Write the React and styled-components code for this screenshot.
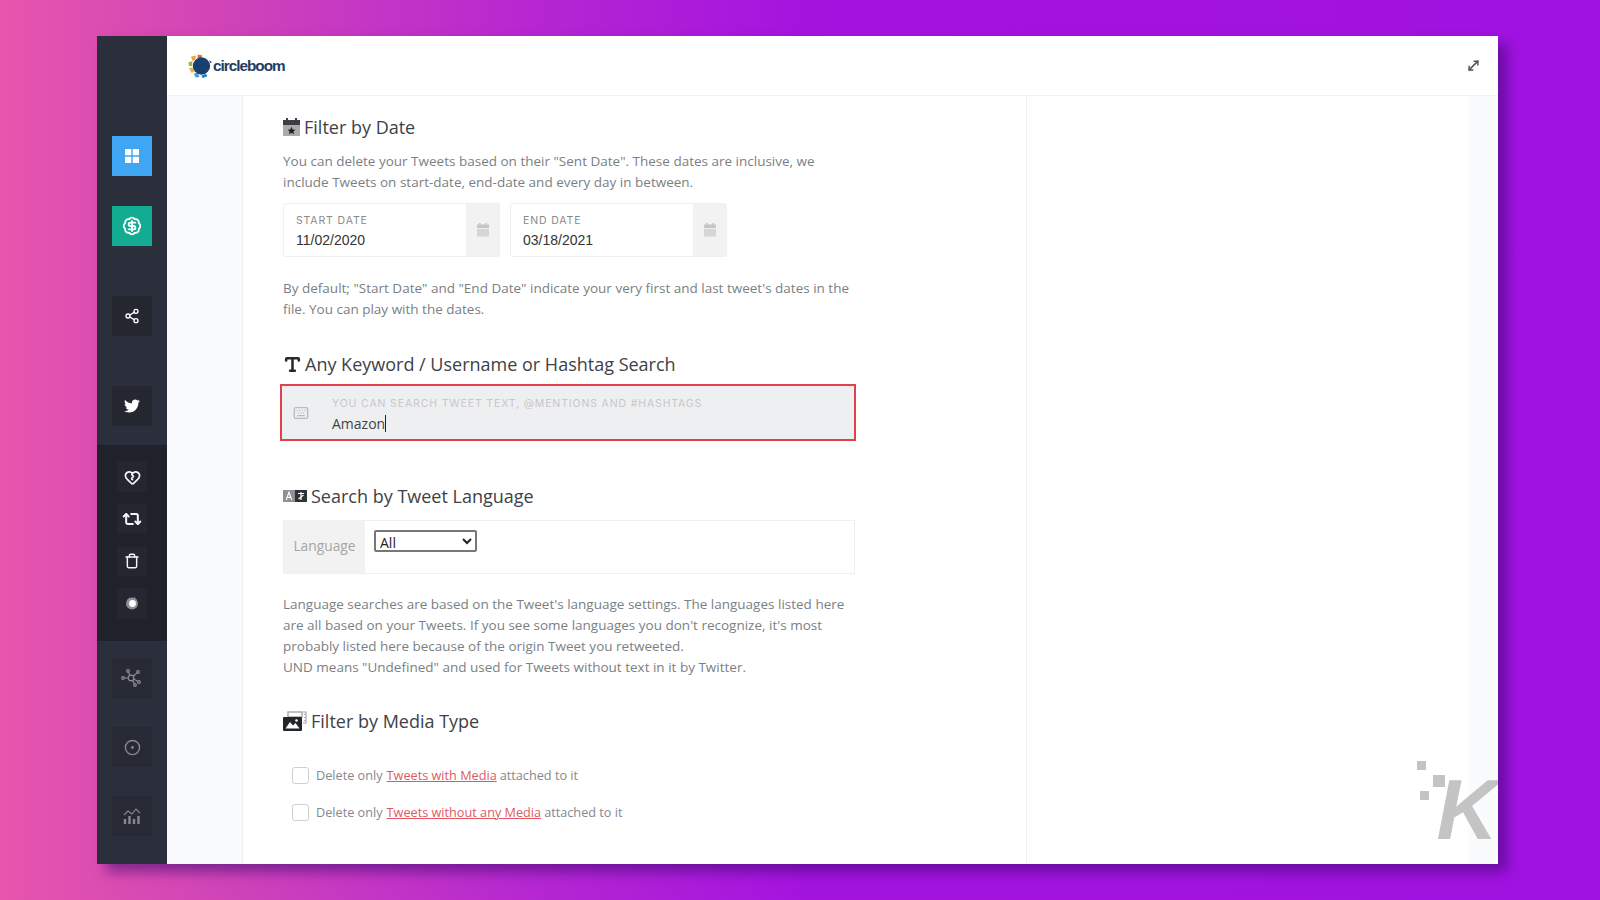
import React from 'react'
import styled, { createGlobalStyle } from 'styled-components'
import { BadgeDollarSign, Share2, HeartCrack, Repeat2, Trash, CircleDot, Type, Keyboard, MoveDiagonal } from 'lucide-react'
import { FaTwitter } from 'react-icons/fa'

const Global = createGlobalStyle`
  html, body {
    margin: 0;
    height: 900px;
    overflow: hidden;
  }
  body {
    background: linear-gradient(90deg, #e755ac 0%, #d044b8 14%, #b526d2 34%, #a414df 50%, #a012e0 100%);
    font-family: 'Open Sans', sans-serif;
  }
`

const Stage = styled.div`
  height: 900px;
  box-sizing: border-box;
  padding: 36px 102px 36px 97px;
`

const Win = styled.div`
  position: relative;
  display: flex;
  height: 828px;
  background: #fff;
  box-shadow: 9px 8px 12px rgba(60, 10, 110, 0.55);
  overflow: hidden;
`

const Sidebar = styled.div`
  width: 70px;
  flex: none;
  display: flex;
  flex-direction: column;
  align-items: center;
  background: #2b2f3b;
`

const SideButton = styled.div`
  width: 40px;
  height: 40px;
  flex: none;
  margin-top: ${p => p.$gap}px;
  display: flex;
  align-items: center;
  justify-content: center;
  background: ${p => p.$bg || '#24272f'};
  color: ${p => p.$fg || '#fff'};
`

const SideGroup = styled.div`
  width: 100%;
  height: 196px;
  margin-top: 19px;
  padding-top: 17px;
  box-sizing: border-box;
  background: #1f222b;
  display: flex;
  flex-direction: column;
  align-items: center;
  gap: 12px;
`

const SmallButton = styled.div`
  width: 30px;
  height: 30px;
  display: flex;
  align-items: center;
  justify-content: center;
  background: #242730;
  color: #f4f4f4;
`

const Main = styled.div`
  flex: 1;
  min-width: 0;
  display: flex;
  flex-direction: column;
`

const Header = styled.div`
  height: 59px;
  flex: none;
  display: flex;
  align-items: center;
  justify-content: space-between;
  padding: 0 17px 0 21px;
  border-bottom: 1px solid #f1f2f3;
`

const Logo = styled.div`
  display: flex;
  align-items: center;
  gap: 0;
  color: #1f3d63;
  font-family: 'Liberation Sans', sans-serif;
  font-weight: 700;
  font-size: 15.3px;
  letter-spacing: -1px;
`

const Expand = styled.div`
  display: flex;
  color: #555;
`

const Body = styled.div`
  flex: 1;
  min-height: 0;
  display: flex;
`

const Gutter = styled.div`
  width: ${p => p.$w}px;
  flex: none;
  background: #fafbfc;
`

const Card = styled.div`
  width: 785px;
  flex: none;
  box-sizing: border-box;
  padding: 19px 0 0 40px;
  background: #fff;
  border-left: 1px solid #eef0f2;
  border-right: 1px solid #eef0f2;
  overflow: hidden;
`

const Column = styled.div`
  width: 573px;
`

const RightPane = styled.div`
  flex: 1;
  background: #fff;
`

const Heading = styled.div`
  display: flex;
  align-items: center;
  gap: ${p => p.$gap || 4}px;
  height: 24px;
  margin-top: ${p => p.$top || 0}px;
  font-size: 18px;
  color: #3d4248;
  svg { flex: none; }
`

const Para = styled.p`
  margin: ${p => p.$top}px 0 0;
  font-size: 13.5px;
  line-height: 21px;
  color: #7b7f84;
  white-space: nowrap;
`

const DateRow = styled.div`
  display: flex;
  gap: 10px;
  margin-top: 10px;
`

const DateBox = styled.div`
  width: 217px;
  height: 54px;
  box-sizing: border-box;
  display: flex;
  border: 1px solid #f0f0f0;
  border-radius: 2px;
`

const DateField = styled.div`
  flex: 1;
  padding: 10px 12px 0;
`

const TinyLabel = styled.div`
  font-family: Inter, sans-serif;
  font-size: 10.5px;
  line-height: 14px;
  letter-spacing: 0.87px;
  color: ${p => p.$fg || '#8a8a8a'};
  white-space: nowrap;
`

const DateValue = styled.div`
  margin-top: 3px;
  font-family: 'Liberation Sans', sans-serif;
  font-size: 14px;
  line-height: 18px;
  color: #333;
`

const Addon = styled.div`
  width: ${p => p.$w}px;
  flex: none;
  display: flex;
  align-items: center;
  justify-content: center;
  background: #f2f2f2;
  color: #c6c6c6;
  font-size: 13.8px;
`

const LangLabel = styled.span`
  margin-bottom: 3px;
  color: #a4a6a8;
`

const SearchBox = styled.div`
  width: 576px;
  height: 57px;
  margin: 8px 0 0 -3px;
  box-sizing: border-box;
  display: flex;
  background: #eeeff0;
  border: 2px solid #e0414d;
`

const SearchIcon = styled.div`
  width: 50px;
  flex: none;
  box-sizing: border-box;
  padding-left: 11px;
  display: flex;
  align-items: center;
  color: #b9b9b9;
`

const SearchField = styled.div`
  flex: 1;
  padding-top: 11px;
`

const SearchValue = styled.div`
  margin-top: 2px;
  display: flex;
  align-items: center;
  height: 20px;
  font-size: 14px;
  color: #444;
`

const Caret = styled.span`
  width: 1px;
  height: 17px;
  background: #222;
`

const LangBox = styled.div`
  width: 572px;
  height: 54px;
  margin-top: 12px;
  box-sizing: border-box;
  display: flex;
  border: 1px solid #f0f0f0;
`

const LangSelect = styled.select`
  width: 103px;
  height: 22px;
  margin: 9px 0 0 9px;
  padding: 0;
  font-family: 'Open Sans', sans-serif;
  font-size: 14px;
  line-height: 18px;
  color: #222;
  background: #fff;
  border: 2px solid #777;
  border-radius: 2px;
`

const CheckRow = styled.label`
  display: flex;
  align-items: center;
  height: 20px;
  margin: ${p => p.$top}px 0 0 9px;
  font-size: 12.7px;
  color: #85898d;
`

const Box = styled.span`
  width: 15px;
  height: 15px;
  flex: none;
  margin-right: 7px;
  border: 1px solid #cfcfcf;
  border-radius: 3px;
`

const Link = styled.a`
  margin: 0 3px 0 4px;
  color: #e2585f;
  text-decoration: underline;
`

const Watermark = styled.div`
  position: absolute;
  right: 0;
  bottom: 23px;
  width: 81px;
  height: 80px;
`

const KGlyph = styled.span`
  position: absolute;
  right: 0;
  bottom: -11px;
  color: #c4c4c4;
  font-family: 'Liberation Sans', sans-serif;
  font-weight: 700;
  font-style: italic;
  font-size: 85px;
  line-height: 85px;
`

const Dot = styled.i`
  position: absolute;
  left: ${p => p.$x}px;
  top: ${p => p.$y}px;
  width: ${p => p.$s}px;
  height: ${p => p.$s}px;
  background: #c4c4c4;
`

const GridIcon = () => (
  <svg width='14' height='14' viewBox='0 0 14 14' fill='currentColor'>
    <rect x='0' y='0' width='6.3' height='6.3' rx='.6' />
    <rect x='7.7' y='0' width='6.3' height='6.3' rx='.6' />
    <rect x='0' y='7.7' width='6.3' height='6.3' rx='.6' />
    <rect x='7.7' y='7.7' width='6.3' height='6.3' rx='.6' />
  </svg>
)

const PlumIcon = () => (
  <svg width='14' height='16' viewBox='0 0 14 16'>
    <circle cx='7' cy='8.5' r='6' fill='#8c8f96' />
    <path d='M4 3 L6 5 M10 2.5 L8.5 5' stroke='#8c8f96' strokeWidth='1.5' />
    <circle cx='7.5' cy='8.5' r='3.4' fill='#fff' />
  </svg>
)

const NetworkIcon = () => (
  <svg width='22' height='18' viewBox='0 0 22 18' fill='none' stroke='#8b8e96' strokeWidth='1.2'>
    <circle cx='10' cy='9' r='2.8' />
    <circle cx='2' cy='9' r='1.3' />
    <circle cx='7' cy='2' r='1.3' />
    <circle cx='17' cy='3' r='1.3' />
    <circle cx='18' cy='13' r='1.3' />
    <circle cx='14' cy='16' r='1.3' />
    <path d='M3.3 9 H7.2 M7.4 3.2 L9 6.4 M16 3.9 L12.2 7.2 M17 12.4 L12.7 10 M13.7 14.8 L11.5 11.4' />
  </svg>
)

const ChartIcon = () => (
  <svg width='18' height='18' viewBox='0 0 18 18' fill='none' stroke='#85888f'>
    <path d='M1 8 L5 4 L9 7 L13 2 L17 6' strokeWidth='1.1' />
    <path d='M2 17 V12 M6.5 17 V9 M11 17 V12 M15.5 17 V9' strokeWidth='2.4' />
  </svg>
)

const CalendarIcon = () => (
  <svg width='14' height='14' viewBox='0 0 14 14' fill='currentColor'>
    <rect x='1' y='1.5' width='12' height='3.6' />
    <rect x='3' y='0' width='1.6' height='2.5' />
    <rect x='9.4' y='0' width='1.6' height='2.5' />
    <rect x='1' y='6' width='12' height='7.5' opacity='.65' />
  </svg>
)

const StarCalendarIcon = () => (
  <svg width='17' height='18' viewBox='0 0 17 18'>
    <rect x='0' y='2' width='17' height='5' fill='#3c3f44' />
    <rect x='3' y='0' width='2' height='4' fill='#3c3f44' />
    <rect x='12' y='0' width='2' height='4' fill='#3c3f44' />
    <rect x='0' y='7' width='17' height='11' fill='#a9abad' />
    <path d='M8.5 8.8 L9.7 11.4 L12.4 11.7 L10.4 13.5 L11 16.2 L8.5 14.8 L6 16.2 L6.6 13.5 L4.6 11.7 L7.3 11.4 Z' fill='#222' />
  </svg>
)

const LanguageIcon = () => (
  <svg width='24' height='12' viewBox='0 0 24 12'>
    <rect x='0' y='0' width='12' height='12' fill='#8f9194' />
    <rect x='12' y='0' width='12' height='12' fill='#2f3236' />
    <path d='M3.2 10 L6 2.2 L8.8 10 M4.3 7.4 H7.7' stroke='#fff' strokeWidth='1.1' fill='none' />
    <path d='M15 3.5 H21 M18 2 V10 M15.5 9 L20.5 5' stroke='#fff' strokeWidth='1.2' fill='none' />
  </svg>
)

const MediaIcon = () => (
  <svg width='24' height='20' viewBox='0 0 24 20'>
    <rect x='5' y='1' width='14' height='5' fill='none' stroke='#a4a6a8' strokeWidth='1.4' />
    <path d='M20 1 H23 V12 H20 M21.5 3 V4 M21.5 6 V7 M21.5 9 V10' fill='none' stroke='#a4a6a8' strokeWidth='1.2' />
    <rect x='0' y='6' width='19' height='14' rx='1' fill='#22252a' />
    <path d='M2.5 17.5 L7 11 L10 14.5 L12.5 12 L16.5 17.5 Z' fill='#fff' />
    <circle cx='13.5' cy='9.5' r='1.3' fill='#fff' />
  </svg>
)

const LogoMark = () => (
  <svg width='25' height='26' viewBox='0 0 26 26'>
    <path d='M10 1 L15 2 L13 6 L10 5 Z' fill='#e2673a' />
    <path d='M3 3.5 L8 2 L8 6 L5 8 Z' fill='#f0a23c' />
    <path d='M0.5 9 L4.5 8 L4.5 13 L1 13 Z' fill='#8cbb46' />
    <path d='M1 15 L5 14.5 L7 19 L3.5 20 Z' fill='#eeb43e' />
    <path d='M6 21 L10 20 L12 24.5 L8 25 Z' fill='#3f9fd8' />
    <path d='M14 23 L19 21 L20 24 L15 25.5 Z' fill='#1e82c4' />
    <circle cx='14' cy='13' r='9' fill='#173f6f' />
    <path d='M22 7 L25 9 L23 10 Z' fill='#173f6f' />
  </svg>
)

export default function App () {
  return (
    <Stage>
      <Global />
      <Win>
        <Sidebar>
          <SideButton $gap={100} $bg='#3ea6f2'><GridIcon /></SideButton>
          <SideButton $gap={30} $bg='#13ab91'><BadgeDollarSign size={20} strokeWidth={2.2} /></SideButton>
          <SideButton $gap={50}><Share2 size={16} /></SideButton>
          <SideButton $gap={50}><FaTwitter size={16} /></SideButton>
          <SideGroup>
            <SmallButton><HeartCrack size={17} strokeWidth={2.4} /></SmallButton>
            <SmallButton><Repeat2 size={20} strokeWidth={2.4} /></SmallButton>
            <SmallButton><Trash size={16} strokeWidth={2.2} /></SmallButton>
            <SmallButton><PlumIcon /></SmallButton>
          </SideGroup>
          <SideButton $gap={17} $bg='#272a35'><NetworkIcon /></SideButton>
          <SideButton $gap={29} $bg='#272a35' $fg='#85888f'><CircleDot size={17} /></SideButton>
          <SideButton $gap={29} $bg='#272a35'><ChartIcon /></SideButton>
        </Sidebar>
        <Main>
          <Header>
            <Logo><LogoMark />circleboom</Logo>
            <Expand><MoveDiagonal size={15} strokeWidth={2.4} /></Expand>
          </Header>
          <Body>
            <Gutter $w={75} />
            <Card>
              <Column>
                <Heading><StarCalendarIcon />Filter by Date</Heading>
                <Para $top={12}>
                  You can delete your Tweets based on their "Sent Date". These dates are inclusive, we
                  <br />include Tweets on start-date, end-date and every day in between.
                </Para>
                <DateRow>
                  <DateBox>
                    <DateField>
                      <TinyLabel>START DATE</TinyLabel>
                      <DateValue>11/02/2020</DateValue>
                    </DateField>
                    <Addon $w={33}><CalendarIcon /></Addon>
                  </DateBox>
                  <DateBox>
                    <DateField>
                      <TinyLabel>END DATE</TinyLabel>
                      <DateValue>03/18/2021</DateValue>
                    </DateField>
                    <Addon $w={33}><CalendarIcon /></Addon>
                  </DateBox>
                </DateRow>
                <Para $top={21}>
                  By default; "Start Date" and "End Date" indicate your very first and last tweet's dates in the
                  <br />file. You can play with the dates.
                </Para>
                <Heading $top={32} $gap={3}><Type size={19} strokeWidth={3.2} color='#26292d' />Any Keyword / Username or Hashtag Search</Heading>
                <SearchBox>
                  <SearchIcon><Keyboard size={16} /></SearchIcon>
                  <SearchField>
                    <TinyLabel $fg='#c6c7c9'>YOU CAN SEARCH TWEET TEXT, @MENTIONS AND #HASHTAGS</TinyLabel>
                    <SearchValue>Amazon<Caret /></SearchValue>
                  </SearchField>
                </SearchBox>
                <Heading $top={43} $gap={4}><LanguageIcon />Search by Tweet Language</Heading>
                <LangBox>
                  <Addon $w={81}><LangLabel>Language</LangLabel></Addon>
                  <LangSelect defaultValue='All'>
                    <option>All</option>
                  </LangSelect>
                </LangBox>
                <Para $top={20}>
                  Language searches are based on the Tweet's language settings. The languages listed here
                  <br />are all based on your Tweets. If you see some languages you don't recognize, it's most
                  <br />probably listed here because of the origin Tweet you retweeted.
                  <br />UND means "Undefined" and used for Tweets without text in it by Twitter.
                </Para>
                <Heading $top={31} $gap={4}><MediaIcon />Filter by Media Type</Heading>
                <CheckRow $top={32}><Box />Delete only<Link>Tweets with Media</Link>attached to it</CheckRow>
                <CheckRow $top={17}><Box />Delete only<Link>Tweets without any Media</Link>attached to it</CheckRow>
              </Column>
            </Card>
            <RightPane />
            <Gutter $w={30} />
          </Body>
        </Main>
        <Watermark>
          <Dot $x={0} $y={0} $s={9} />
          <Dot $x={16} $y={14} $s={12} />
          <Dot $x={3} $y={30} $s={9} />
          <KGlyph>K</KGlyph>
        </Watermark>
      </Win>
    </Stage>
  )
}
